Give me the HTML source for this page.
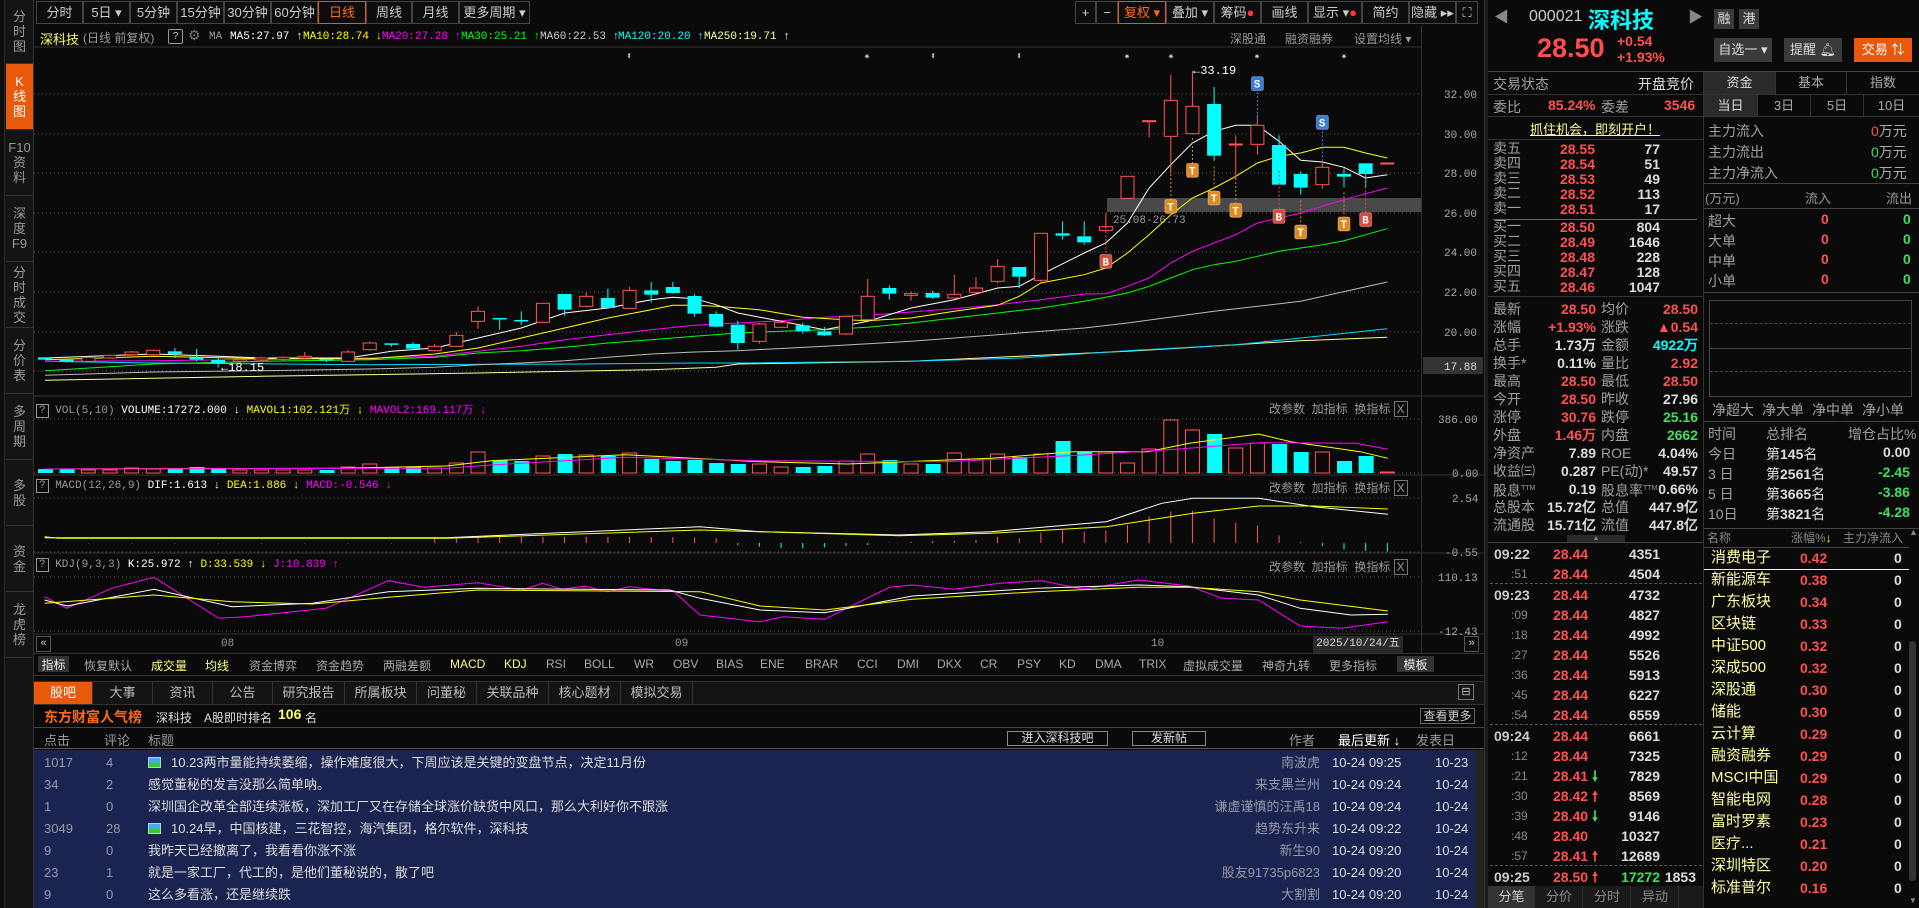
<!DOCTYPE html>
<html><head><meta charset="utf-8">
<style>
*{box-sizing:border-box;margin:0;padding:0}
body{width:1919px;height:908px;overflow:hidden;background:#0a0a0a;font-family:"Liberation Sans","Noto Sans CJK SC",sans-serif;color:#aaa;position:relative}
.a{position:absolute;white-space:nowrap}
.side{position:absolute;left:0;top:0;width:34px;height:908px;background:#141414;border-right:1px solid #333}
.side div{position:absolute;left:6px;width:27px;border-bottom:1px solid #333;color:#999;font-size:13px;line-height:15px;text-align:center;display:flex;flex-direction:column;justify-content:center}
.tb{position:absolute;top:1px;height:23px;border:1px solid #444;color:#ccc;font-size:13px;line-height:21px;text-align:center;background:#0d0d0d}
.m{font-family:"Liberation Mono","Noto Sans CJK SC",monospace;font-size:11px}
.r{color:#ff5050}.g{color:#3de05a}.c{color:#00ffff}.w{color:#ddd}.y{color:#ffff00}.mg{color:#ff00ff}
.lb{font-size:14px;color:#a0a0a0}
.num{font-size:14px;font-weight:bold;font-family:"Liberation Sans",sans-serif}
.hl{position:absolute;height:1px;background:#333}
.it{font-size:12px;color:#aaa;top:657px}
.nt{position:absolute;top:682px;height:22px;font-size:13px;line-height:22px;text-align:center;color:#bbb;border-right:1px solid #333}
.row{position:absolute;left:34px;width:1441px;height:22px;font-size:13px;line-height:22px;color:#ddd}
.row span{position:absolute}
</style></head><body>

<!-- left sidebar -->
<div class="side">
<div style="top:0;height:64px">分<br>时<br>图</div>
<div style="top:64px;height:66px;background:#e8590c;color:#fff">K<br>线<br>图</div>
<div style="top:130px;height:66px">F10<br>资<br>料</div>
<div style="top:196px;height:66px">深<br>度<br>F9</div>
<div style="top:262px;height:66px">分<br>时<br>成<br>交</div>
<div style="top:328px;height:66px">分<br>价<br>表</div>
<div style="top:394px;height:66px">多<br>周<br>期</div>
<div style="top:460px;height:66px">多<br>股</div>
<div style="top:526px;height:66px">资<br>金</div>
<div style="top:592px;height:66px">龙<br>虎<br>榜</div>
</div>
<div class="a" style="left:0;top:0;width:5px;height:908px;background:#0e0e0e;border-right:1px solid #2a2a2a"></div>

<!-- top toolbar -->
<div class="tb" style="left:36px;width:47px">分时</div>
<div class="tb" style="left:83px;width:47px">5日 ▾</div>
<div class="tb" style="left:130px;width:47px">5分钟</div>
<div class="tb" style="left:177px;width:47px">15分钟</div>
<div class="tb" style="left:224px;width:47px">30分钟</div>
<div class="tb" style="left:271px;width:47px">60分钟</div>
<div class="tb" style="left:318px;width:48px;border-color:#e8590c;color:#ff6a1a">日线</div>
<div class="tb" style="left:366px;width:46px">周线</div>
<div class="tb" style="left:412px;width:47px">月线</div>
<div class="tb" style="left:459px;width:71px">更多周期 ▾</div>

<div class="tb" style="left:1075px;width:21px">+</div>
<div class="tb" style="left:1096px;width:22px">−</div>
<div class="tb" style="left:1118px;width:48px;border-color:#e8590c;color:#ff6a1a">复权 ▾</div>
<div class="tb" style="left:1166px;width:48px">叠加 ▾</div>
<div class="tb" style="left:1214px;width:47px">筹码<span style="color:#f33">●</span></div>
<div class="tb" style="left:1261px;width:47px">画线</div>
<div class="tb" style="left:1308px;width:54px">显示 ▾<span style="color:#f33">●</span></div>
<div class="tb" style="left:1362px;width:47px">简约</div>
<div class="tb" style="left:1409px;width:47px">隐藏 ▸▸</div>
<div class="tb" style="left:1456px;width:22px">⛶</div>

<!-- info line -->
<div class="a" style="left:40px;top:29px;font-size:13px;color:#ffff66">深科技</div>
<div class="a" style="left:83px;top:29px;font-size:12px;color:#999">(日线 前复权)</div>
<div class="a" style="left:168px;top:29px;width:15px;height:15px;border:1px solid #999;border-radius:2px;font-size:10px;text-align:center;line-height:13px;color:#ccc">?</div>
<div class="a" style="left:188px;top:27px;font-size:14px;color:#777">⚙</div>
<div class="a m" style="left:209px;top:31px;color:#999">MA</div>
<div class="a m" style="left:230px;top:31px;color:#fff">MA5:27.97 ↑</div>
<div class="a m" style="left:303px;top:31px;color:#ff0">MA10:28.74 ↓</div>
<div class="a m" style="left:382px;top:31px;color:#f0f">MA20:27.28 ↑</div>
<div class="a m" style="left:461px;top:31px;color:#0f0">MA30:25.21 ↑</div>
<div class="a m" style="left:540px;top:31px;color:#ccc">MA60:22.53 ↑</div>
<div class="a m" style="left:618px;top:31px;color:#0ff">MA120:20.20 ↑</div>
<div class="a m" style="left:704px;top:31px;color:#ffff99">MA250:19.71 ↑</div>
<div class="a" style="left:1230px;top:30px;font-size:12px;color:#999">深股通</div>
<div class="a" style="left:1285px;top:30px;font-size:12px;color:#999">融资融券</div>
<div class="a" style="left:1354px;top:30px;font-size:12px;color:#999">设置均线 ▾</div>

<svg id="ch" class="a" style="left:0;top:0" width="1488" height="680"></svg>

<!-- sub panel headers -->
<div class="a m" style="left:36px;top:401px;color:#999"><span style="border:1px solid #999;padding:0 2px">?</span> VOL(5,10) <span style="color:#fff">VOLUME:17272.000 ↓</span> <span class="y">MAVOL1:102.121万 ↓</span> <span class="mg">MAVOL2:169.117万 ↓</span></div>
<div class="a m" style="left:36px;top:480px;color:#999"><span style="border:1px solid #999;padding:0 2px">?</span> MACD(12,26,9) <span style="color:#fff">DIF:1.613 ↓</span> <span class="y">DEA:1.886 ↓</span> <span class="mg">MACD:-0.546 ↓</span></div>
<div class="a m" style="left:36px;top:559px;color:#999"><span style="border:1px solid #999;padding:0 2px">?</span> KDJ(9,3,3) <span style="color:#fff">K:25.972 ↑</span> <span class="y">D:33.539 ↓</span> <span class="mg">J:10.839 ↑</span></div>
<div class="a" style="left:1269px;top:400px;font-size:12px;color:#999">改参数 &nbsp;加指标 &nbsp;换指标 <span style="border:1px solid #777;padding:0 2px">X</span></div>
<div class="a" style="left:1269px;top:479px;font-size:12px;color:#999">改参数 &nbsp;加指标 &nbsp;换指标 <span style="border:1px solid #777;padding:0 2px">X</span></div>
<div class="a" style="left:1269px;top:558px;font-size:12px;color:#999">改参数 &nbsp;加指标 &nbsp;换指标 <span style="border:1px solid #777;padding:0 2px">X</span></div>

<!-- time axis -->
<div class="a" style="left:36px;top:636px;width:15px;height:16px;border:1px solid #555;font-size:11px;color:#ccc;text-align:center">«</div>
<div class="a m" style="left:221px;top:638px;color:#999">08</div>
<div class="a m" style="left:675px;top:638px;color:#999">09</div>
<div class="a m" style="left:1151px;top:638px;color:#999">10</div>
<div class="a m" style="left:1313px;top:636px;width:90px;height:17px;background:#2a2a2a;color:#ddd;line-height:17px;text-align:center">2025/10/24/五</div>
<div class="a" style="left:1464px;top:636px;width:15px;height:16px;border:1px solid #555;font-size:11px;color:#ccc;text-align:center">»</div>
<div class="hl" style="left:34px;top:653px;width:1450px;background:#333"></div>

<!-- indicator tabs -->
<div class="a" style="left:38px;top:656px;width:31px;height:16px;background:#333;color:#eee;font-size:12px;text-align:center">指标</div>
<div class="a it" style="left:84px">恢复默认</div>
<div class="a it" style="left:151px;color:#ffff80">成交量</div>
<div class="a it" style="left:205px;color:#ffff80">均线</div>
<div class="a it" style="left:249px">资金博弈</div>
<div class="a it" style="left:316px">资金趋势</div>
<div class="a it" style="left:383px">两融差额</div>
<div class="a it" style="left:450px;color:#ffff80">MACD</div>
<div class="a it" style="left:504px;color:#ffff80">KDJ</div>
<div class="a it" style="left:546px">RSI</div>
<div class="a it" style="left:584px">BOLL</div>
<div class="a it" style="left:634px">WR</div>
<div class="a it" style="left:673px">OBV</div>
<div class="a it" style="left:716px">BIAS</div>
<div class="a it" style="left:760px">ENE</div>
<div class="a it" style="left:805px">BRAR</div>
<div class="a it" style="left:857px">CCI</div>
<div class="a it" style="left:897px">DMI</div>
<div class="a it" style="left:937px">DKX</div>
<div class="a it" style="left:980px">CR</div>
<div class="a it" style="left:1017px">PSY</div>
<div class="a it" style="left:1059px">KD</div>
<div class="a it" style="left:1095px">DMA</div>
<div class="a it" style="left:1139px">TRIX</div>
<div class="a it" style="left:1183px">虚拟成交量</div>
<div class="a it" style="left:1262px">神奇九转</div>
<div class="a it" style="left:1329px">更多指标</div>
<div class="a" style="left:1397px;top:656px;width:37px;height:16px;background:#333;color:#eee;font-size:12px;text-align:center">模板</div>
<div class="hl" style="left:34px;top:675px;width:1450px;background:#333"></div>

<!-- news tabs -->
<div class="a" style="left:34px;top:681px;width:1450px;height:24px;background:#141414;border-top:1px solid #333;border-bottom:1px solid #333"></div>
<div class="nt" style="left:34px;width:59px;background:#e8590c;color:#fff">股吧</div>
<div class="nt" style="left:93px;width:60px">大事</div>
<div class="nt" style="left:153px;width:60px">资讯</div>
<div class="nt" style="left:213px;width:60px">公告</div>
<div class="nt" style="left:273px;width:72px">研究报告</div>
<div class="nt" style="left:345px;width:72px">所属板块</div>
<div class="nt" style="left:417px;width:60px">问董秘</div>
<div class="nt" style="left:477px;width:72px">关联品种</div>
<div class="nt" style="left:549px;width:72px">核心题材</div>
<div class="nt" style="left:621px;width:72px">模拟交易</div>
<div class="a" style="left:1458px;top:684px;width:16px;height:16px;border:1px solid #777;color:#ccc;font-size:11px;text-align:center;line-height:14px">⊟</div>

<div class="a" style="left:44px;top:707px;font-size:14px;font-weight:bold;color:#ff6a1a">东方财富人气榜</div>
<div class="a" style="left:156px;top:709px;font-size:12px;color:#ddd">深科技</div>
<div class="a" style="left:204px;top:709px;font-size:12px;color:#ddd">A股即时排名</div>
<div class="a" style="left:278px;top:706px;font-size:14px;font-weight:bold;color:#ffff66">106</div>
<div class="a" style="left:305px;top:709px;font-size:12px;color:#ddd">名</div>
<div class="a" style="left:1420px;top:708px;width:55px;height:16px;border:1px solid #666;font-size:12px;color:#ccc;text-align:center;line-height:14px">查看更多</div>
<div class="hl" style="left:34px;top:727px;width:1450px;background:#444"></div>
<div class="a" style="left:44px;top:730px;font-size:13px;color:#999">点击</div>
<div class="a" style="left:104px;top:730px;font-size:13px;color:#999">评论</div>
<div class="a" style="left:148px;top:730px;font-size:13px;color:#999">标题</div>
<div class="a" style="left:1007px;top:731px;width:101px;height:15px;border:1px solid #888;font-size:12px;color:#ddd;text-align:center;line-height:13px">进入深科技吧</div>
<div class="a" style="left:1132px;top:731px;width:74px;height:15px;border:1px solid #888;font-size:12px;color:#ddd;text-align:center;line-height:13px">发新帖</div>
<div class="a" style="left:1289px;top:730px;font-size:13px;color:#999">作者</div>
<div class="a" style="left:1338px;top:730px;font-size:13px;color:#fff">最后更新 ↓</div>
<div class="a" style="left:1416px;top:730px;font-size:13px;color:#999">发表日</div>
<div class="hl" style="left:34px;top:748px;width:1450px;background:#555"></div>
<div class="a" style="left:34px;top:750px;width:1441px;height:158px;background:#1b2350"></div>
<div class="a" style="left:1475px;top:750px;width:9px;height:158px;background:#222"></div>

<div id="rows"></div>

<!-- separator strip -->
<div class="a" style="left:1484px;top:0;width:4px;height:908px;background:#1a1a1a;border-left:1px solid #333"></div>

<!-- right panel -->
<div class="a" style="left:1494px;top:6px;font-size:15px;color:#888">◀</div>
<div class="a" style="left:1529px;top:8px;font-size:16px;color:#ccc">000021</div>
<div class="a" style="left:1588px;top:3px;font-size:22px;font-weight:bold;color:#00ffff">深科技</div>
<div class="a" style="left:1688px;top:6px;font-size:15px;color:#888">▶</div>
<div class="a" style="left:1537px;top:33px;font-size:27px;font-weight:bold;color:#ff4d4d">28.50</div>
<div class="a num r" style="left:1617px;top:33px">+0.54</div>
<div class="a num r" style="left:1617px;top:49px">+1.93%</div>
<div class="a" style="left:1714px;top:9px;width:20px;height:20px;background:#3a3a3a;color:#ddd;font-size:13px;text-align:center;line-height:20px">融</div>
<div class="a" style="left:1739px;top:9px;width:20px;height:20px;background:#3a3a3a;color:#ddd;font-size:13px;text-align:center;line-height:20px">港</div>
<div class="a" style="left:1714px;top:38px;width:58px;height:24px;background:#3a3a3a;color:#ddd;font-size:13px;text-align:center;line-height:24px">自选一 ▾</div>
<div class="a" style="left:1784px;top:38px;width:58px;height:24px;background:#3a3a3a;color:#ddd;font-size:13px;text-align:center;line-height:24px">提醒 🔔︎</div>
<div class="a" style="left:1854px;top:38px;width:58px;height:24px;background:#e8590c;color:#fff;font-size:13px;text-align:center;line-height:24px">交易 ⇅</div>
<div class="hl" style="left:1488px;top:71px;width:431px;background:#444"></div>
<div class="a" style="left:1703px;top:71px;width:1px;height:837px;background:#333"></div>

<div class="a lb" style="left:1493px;top:74px">交易状态</div>
<div class="a w" style="left:1638px;top:74px;font-size:14px">开盘竞价</div>
<div class="hl" style="left:1488px;top:94px;width:215px"></div>
<div class="a lb" style="left:1493px;top:97px">委比</div>
<div class="a num r" style="left:1548px;top:97px">85.24%</div>
<div class="a lb" style="left:1601px;top:97px">委差</div>
<div class="a num r" style="left:1664px;top:97px">3546</div>
<div class="hl" style="left:1488px;top:116px;width:215px"></div>
<div class="a" style="left:1530px;top:119px;font-size:13px;color:#ffff99;text-decoration:underline">抓住机会，即刻开户！</div>
<div class="hl" style="left:1488px;top:139px;width:215px"></div>
<div id="ob"></div>
<div class="hl" style="left:1493px;top:219px;width:204px;background:#666"></div>
<div class="hl" style="left:1488px;top:296px;width:215px"></div>
<div id="st"></div>
<div class="a" style="left:1567px;top:535px;width:58px;height:7px;background:#2a2a2a;color:#888;font-size:7px;text-align:center;line-height:7px">▲</div>
<div class="hl" style="left:1488px;top:542px;width:215px;background:#444"></div>
<div id="tk"></div>
<div class="a" style="left:1488px;top:886px;width:215px;height:22px;background:#1a1a1a"></div>
<div class="a" style="left:1488px;top:886px;width:47px;height:22px;background:#333;color:#ccc;font-size:13px;text-align:center;line-height:22px">分笔</div>
<div class="a" style="left:1536px;top:886px;width:47px;height:22px;color:#888;font-size:13px;text-align:center;line-height:22px;border-right:1px solid #333">分价</div>
<div class="a" style="left:1584px;top:886px;width:47px;height:22px;color:#888;font-size:13px;text-align:center;line-height:22px;border-right:1px solid #333">分时</div>
<div class="a" style="left:1632px;top:886px;width:47px;height:22px;color:#888;font-size:13px;text-align:center;line-height:22px;border-right:1px solid #333">异动</div>

<!-- right col -->
<div class="a" style="left:1704px;top:72px;width:71px;height:22px;background:#2a2a2a;color:#ddd;font-size:13px;text-align:center;line-height:22px">资金</div>
<div class="a" style="left:1775px;top:72px;width:71px;height:22px;color:#aaa;font-size:13px;text-align:center;line-height:22px;border-left:1px solid #333">基本</div>
<div class="a" style="left:1846px;top:72px;width:73px;height:22px;color:#aaa;font-size:13px;text-align:center;line-height:22px;border-left:1px solid #333">指数</div>
<div class="hl" style="left:1704px;top:94px;width:215px"></div>
<div class="a" style="left:1704px;top:95px;width:53px;height:21px;background:#2a2a2a;color:#ddd;font-size:13px;text-align:center;line-height:21px">当日</div>
<div class="a" style="left:1757px;top:95px;width:53px;height:21px;color:#aaa;font-size:13px;text-align:center;line-height:21px;border-left:1px solid #333">3日</div>
<div class="a" style="left:1810px;top:95px;width:53px;height:21px;color:#aaa;font-size:13px;text-align:center;line-height:21px;border-left:1px solid #333">5日</div>
<div class="a" style="left:1863px;top:95px;width:56px;height:21px;color:#aaa;font-size:13px;text-align:center;line-height:21px;border-left:1px solid #333">10日</div>
<div class="hl" style="left:1704px;top:116px;width:215px"></div>
<div class="a lb" style="left:1708px;top:121px">主力流入</div><div class="a" style="left:1871px;top:121px;font-size:14px"><span class="r">0</span>万元</div>
<div class="a lb" style="left:1708px;top:142px">主力流出</div><div class="a" style="left:1871px;top:142px;font-size:14px"><span class="g">0</span>万元</div>
<div class="a lb" style="left:1708px;top:163px">主力净流入</div><div class="a" style="left:1871px;top:163px;font-size:14px"><span class="g">0</span>万元</div>
<div class="hl" style="left:1704px;top:183px;width:215px;background:#444"></div>
<div class="a" style="left:1705px;top:188px;font-size:13px;color:#999">(万元)</div>
<div class="a" style="left:1805px;top:188px;font-size:13px;color:#999">流入</div>
<div class="a" style="left:1886px;top:188px;font-size:13px;color:#999">流出</div>
<div class="hl" style="left:1704px;top:208px;width:215px;background:#444"></div>
<div class="a lb" style="left:1708px;top:211px">超大</div><div class="a num r" style="left:1821px;top:211px">0</div><div class="a num g" style="left:1903px;top:211px">0</div>
<div class="a lb" style="left:1708px;top:231px">大单</div><div class="a num r" style="left:1821px;top:231px">0</div><div class="a num g" style="left:1903px;top:231px">0</div>
<div class="a lb" style="left:1708px;top:251px">中单</div><div class="a num r" style="left:1821px;top:251px">0</div><div class="a num g" style="left:1903px;top:251px">0</div>
<div class="a lb" style="left:1708px;top:271px">小单</div><div class="a num r" style="left:1821px;top:271px">0</div><div class="a num g" style="left:1903px;top:271px">0</div>
<div class="hl" style="left:1704px;top:292px;width:215px;background:#444"></div>
<div class="a" style="left:1709px;top:300px;width:203px;height:97px;border:1px solid #444"></div>
<div class="a" style="left:1710px;top:323px;width:201px;border-top:1px dashed #444"></div>
<div class="a" style="left:1710px;top:348px;width:201px;border-top:1px solid #444"></div>
<div class="a" style="left:1710px;top:371px;width:201px;border-top:1px dashed #444"></div>
<div class="a lb" style="left:1712px;top:400px">净超大</div>
<div class="a lb" style="left:1762px;top:400px">净大单</div>
<div class="a lb" style="left:1812px;top:400px">净中单</div>
<div class="a lb" style="left:1862px;top:400px">净小单</div>
<div class="hl" style="left:1704px;top:421px;width:215px;background:#444"></div>
<div class="a lb" style="left:1708px;top:424px">时间</div>
<div class="a lb" style="left:1766px;top:424px">总排名</div>
<div class="a lb" style="left:1848px;top:424px">增仓占比%</div>
<div class="a lb" style="left:1708px;top:444px">今日</div><div class="a w" style="left:1766px;top:444px;font-size:14px">第<b>145</b>名</div><div class="a num w" style="left:1883px;top:444px">0.00</div>
<div class="a lb" style="left:1708px;top:464px">3 日</div><div class="a w" style="left:1766px;top:464px;font-size:14px">第<b>2561</b>名</div><div class="a num g" style="left:1878px;top:464px">-2.45</div>
<div class="a lb" style="left:1708px;top:484px">5 日</div><div class="a w" style="left:1766px;top:484px;font-size:14px">第<b>3665</b>名</div><div class="a num g" style="left:1878px;top:484px">-3.86</div>
<div class="a lb" style="left:1708px;top:504px">10日</div><div class="a w" style="left:1766px;top:504px;font-size:14px">第<b>3821</b>名</div><div class="a num g" style="left:1878px;top:504px">-4.28</div>
<div class="hl" style="left:1704px;top:528px;width:215px;background:#444"></div>
<div class="a" style="left:1707px;top:529px;font-size:12px;color:#888">名称</div>
<div class="a" style="left:1791px;top:529px;font-size:12px;color:#888">涨幅%<span style="color:#ff0">↓</span></div>
<div class="a" style="left:1843px;top:529px;font-size:12px;color:#888">主力净流入</div>
<div class="a" style="left:1909px;top:527px;font-size:9px;color:#888">▲</div>
<div class="hl" style="left:1704px;top:547px;width:205px;background:#444"></div>
<div class="a" style="left:1704px;top:569px;width:205px;height:1px;background:#ffff99"></div>
<div id="bk"></div>
<div class="a" style="left:1909px;top:641px;width:7px;height:240px;background:#333;border-radius:3px"></div>
<div class="a" style="left:1909px;top:896px;font-size:8px;color:#888">▼</div>

<script>
const S=document.getElementById('ch');let h='';
const X=k=>45+k*21.65, Y=v=>48+v/3;
const ln=(x1,y1,x2,y2,c,e)=>h+=`<line x1="${x1}" y1="${y1}" x2="${x2}" y2="${y2}" stroke="${c}" ${e||''}/>`;
const tx=(x,y,t,c,s,a)=>h+=`<text x="${x}" y="${y}" fill="${c}" font-size="${s||11}" font-family="Liberation Mono,monospace" ${a||''}>${t}</text>`;
const pl=(p,c)=>h+=`<polyline points="${p.map(q=>q.join(',')).join(' ')}" fill="none" stroke="${c}" stroke-width="1"/>`;
// frames
ln(34,47,1421,47,'#333');ln(1421.5,26,1421.5,653,'#333');
ln(34,396,1484,396,'#333');ln(34,475,1484,475,'#333');ln(34,553,1484,553,'#333');ln(34,634,1484,634,'#333');
// grid
const gp=[[94,'32.00'],[134,'30.00'],[173,'28.00'],[213,'26.00'],[252,'24.00'],[292,'22.00'],[332,'20.00'],[371,'']];
gp.forEach(g=>{ln(34,g[0],1421,g[0],'#555','stroke-dasharray="1,3"');if(g[1])tx(1444,g[0]+4,g[1],'#aaa');});
h+=`<rect x="1423" y="357" width="60" height="17" fill="#333"/>`;tx(1444,370,'17.88','#ddd');
[[419,'386.00'],[473,'0.00']].forEach(g=>{ln(34,g[0],1421,g[0],'#555','stroke-dasharray="1,3"');tx(g[1].length>4?1438:1452,g[0]+4,g[1],'#aaa');});
[[498,'2.54'],[552,'-0.55']].forEach(g=>{ln(34,g[0],1421,g[0],'#555','stroke-dasharray="1,3"');tx(g[1].length>4?1445:1452,g[0]+4,g[1],'#aaa');});
[[577,'110.13'],[631,'-12.43']].forEach(g=>{ln(34,g[0],1421,g[0],'#555','stroke-dasharray="1,3"');tx(1438,g[0]+4,g[1],'#aaa');});
// band
h+=`<rect x="1107" y="198" width="314" height="14" fill="#555" opacity="0.85"/>`;
tx(1113,223,'25.08-26.73','#999');
// top markers
[[630,'⬍'],[868,'✷'],[934,'⬍'],[1020,'⬍'],[1128,'✷'],[1172,'✷'],[1258,'✷'],[1345,'✷']].forEach(m=>tx(m[0]-4,59,m[1],'#ccc',10));
// MAs
const mk=(a,c)=>{const p=[];for(let i=0;i<a.length;i+=2)p.push([X(a[i]).toFixed(1),Y(a[i+1]).toFixed(1)]);pl(p,c);};
mk([0,997,10,985,20,975,28,965,31,958,32,948,40,940,45,925,50,910,55,890,58,878,62,868],'#ffff99');
mk([0,940,5,945,15,950,25,948,30,945,32,945,40,940,45,930,50,908,55,890,58,870,62,842],'#00d8ff');
mk([0,982,5,972,10,968,15,963,18,958,20,950,22,945,24,938,26,928,28,918,30,912,32,908,36,895,40,880,44,860,48,840,50,825,54,790,58,760,62,702],'#bbb');
mk([0,968,5,948,10,940,15,935,18,928,20,915,22,908,24,898,26,885,28,875,30,865,32,855,34,850,36,845,38,838,40,825,42,810,44,795,46,780,48,760,49,748,50,735,51,715,52,690,53,665,54,650,55,640,56,625,57,610,58,600,59,590,60,578,61,560,62,542],'#00ff00');
mk([0,940,5,938,10,934,15,930,18,925,20,910,22,895,24,875,26,860,28,845,30,832,32,825,34,818,36,808,38,802,40,792,42,782,44,770,46,755,48,738,49,737,50,715,51,690,52,645,53,610,54,585,55,560,56,525,57,510,58,495,59,475,60,455,61,437,62,420],'#ff00ff');
mk([0,935,5,925,10,932,15,932,18,918,20,900,22,870,24,840,26,810,28,785,29,772,30,772,31,775,32,780,33,785,35,808,37,815,38,818,40,810,42,790,44,772,45,745,46,705,48,680,49,660,50,615,51,560,52,500,53,450,54,420,55,385,56,345,57,325,58,315,59,298,60,298,61,315,62,330],'#ffff00');
mk([0,930,5,918,8,925,10,930,14,930,16,910,18,900,20,870,22,840,24,795,26,780,28,755,29,748,30,752,31,770,32,795,34,820,36,845,38,820,40,780,42,755,44,720,45,715,46,680,48,615,49,585,50,525,51,420,52,350,53,285,54,250,55,232,56,232,57,280,58,337,59,342,60,358,61,390,62,380],'#ffffff');
// candles
const C=[[928,935,928,935,'c'],[935,942,933,944,'c'],[928,940,926,940,'r'],[922,930,920,932,'r'],[912,920,909,922,'r'],[907,920,905,922,'r'],[910,918,900,930,'c'],[928,935,903,940,'c'],[936,946,930,958,'c'],[935,940,930,945,'r'],[930,936,926,940,'r'],[928,934,925,938,'r'],[925,930,912,934,'r'],[933,938,930,942,'c'],[912,940,905,942,'r'],[885,905,880,908,'r'],[886,888,886,896,'c'],[888,902,882,906,'c'],[895,908,888,910,'r'],[862,895,852,897,'r'],[790,820,775,842,'r'],[810,812,810,845,'c'],[816,818,790,830,'c'],[766,823,766,825,'r'],[738,785,738,803,'c'],[745,775,733,778,'r'],[750,780,722,782,'c'],[727,781,717,783,'r'],[727,740,702,763,'c'],[717,735,702,737,'c'],[744,797,738,806,'c'],[798,836,790,838,'c'],[830,885,818,905,'c'],[828,880,825,887,'r'],[823,838,820,840,'r'],[832,850,825,857,'c'],[850,862,837,864,'c'],[805,858,803,862,'r'],[745,815,693,817,'r'],[720,737,712,755,'c'],[737,742,730,758,'r'],[735,749,728,753,'c'],[739,750,680,752,'r'],[720,733,688,740,'r'],[655,700,633,706,'r'],[657,686,657,720,'c'],[556,697,556,705,'r'],[556,563,520,575,'c'],[565,583,520,590,'c'],[536,547,495,549,'r'],[385,451,385,451,'r'],[218,220,218,268,'r'],[157,265,80,375,'r'],[175,257,68,259,'r'],[168,323,117,338,'c'],[288,290,262,390,'r'],[232,289,200,320,'r'],[291,410,262,410,'c'],[378,419,370,440,'c'],[358,410,340,422,'r'],[378,386,362,418,'c'],[346,378,346,418,'c'],[345,347,345,347,'r']];
C.forEach((c,k)=>{const x=X(k),col=c[4]=='r'?'#ff5555':'#00ffff';const t=Y(c[0]),b=Math.max(Y(c[1]),t+1);
ln(x,Y(c[2]),x,t,col);ln(x,b,x,Y(c[3]),col);
if(c[4]=='r')h+=`<rect x="${x-6.5}" y="${t}" width="13" height="${b-t}" fill="#0a0a0a" stroke="${col}"/>`;
else h+=`<rect x="${x-7}" y="${t}" width="14" height="${Math.max(b-t,1.5)}" fill="${col}"/>`;});
// labels
tx(1193,74,'←33.19','#fff',12);tx(221,371,'←18.15','#fff',12);
// markers
const bd=(k,v,l,c,lv)=>{const x=X(k),y=Y(v);if(lv!==undefined)ln(x,Y(lv),x,y,c,'stroke-dasharray="2,2"');h+=`<rect x="${x-6}" y="${y-7}" width="12" height="14" rx="2" fill="${c}" stroke="#fff" stroke-opacity=".3"/>`;tx(x-3.5,y+4,l,'#fff',11,'font-weight="bold"');};
bd(49,640,'B','#d84a3c',525);bd(57,505,'B','#d84a3c',368);bd(61,515,'B','#d84a3c',368);
bd(52,475,'T','#e08a1e',378);bd(53,367,'T','#e08a1e',270);bd(54,450,'T','#e08a1e',355);bd(55,487,'T','#e08a1e',390);bd(58,552,'T','#e08a1e',457);bd(60,528,'T','#e08a1e',433);
bd(56,107,'S','#3a7bd5',222);bd(59,223,'S','#3a7bd5',340);
// volume
const V=[4,4,3,3,5,4,4,6,4,3,3,3,3,3,6,9,6,6,5,10,21,13,12,17,19,18,17,20,14,12,13,10,9,9,6,6,7,12,19,13,9,9,20,14,19,16,19,32,21,21,10,24,53,43,39,25,30,29,21,21,12,17,1];
V.forEach((v,k)=>{const x=X(k),col=C[k][4]=='r'?'#ff5555':'#00ffff';if(C[k][4]=='r')h+=`<rect x="${x-7}" y="${473-v}" width="14" height="${v}" fill="none" stroke="${col}"/>`;else h+=`<rect x="${x-7}" y="${473-v}" width="15" height="${v}" fill="${col}"/>`;});
const z9=(X_,Y_)=>[(X_/2.24).toFixed(1),(390+Y_/3).toFixed(1)], z10=(X_,Y_)=>[(760+X_/2.166).toFixed(1),(390+Y_/3).toFixed(1)];
const P=(a,b,c)=>{const p=[];a.forEach(q=>p.push(z9(q[0],q[1])));b.forEach(q=>p.push(z10(q[0],q[1])));pl(p,c);};
P([[100,237],[760,235],[1000,228],[1100,212],[1400,194]],[[0,215],[190,222],[500,205],[680,185],[840,185],[930,160],[1080,132],[1150,155],[1300,185],[1360,205]],'#ffff00');
P([[100,237],[1000,235],[1100,225],[1400,202]],[[0,212],[400,215],[700,195],[900,178],[1080,158],[1290,160],[1360,178]],'#ff00ff');
// macd
const MH=[460,459,460,459,460,459,460,459,460,459,460,459,460,459,460,459,460,459,445,443,442,441,440,440,441,440,440,440,441,442,443,444,466,470,474,475,472,468,465,458,455,453,452,450,440,445,428,420,425,422,405,380,365,362,385,398,407,437,456,468,478,482,485];
MH.forEach((v,k)=>{const x=X(k);const z=Y(0)*0+543;const y=390+v/3;ln(x,z,x,y,v<458?'#ff5555':'#00ffff');});
P([[100,443],[1000,443],[1568,410]],[[0,425],[300,435],[500,425],[750,395],[870,340],[938,325],[1080,325],[1200,350],[1360,373]],'#ffffff');
P([[100,440],[130,445],[1000,445],[1568,420]],[[0,425],[300,437],[500,430],[750,410],[938,370],[1080,348],[1200,348],[1360,357]],'#ffff00');
// kdj
P([[100,620],[150,655],[250,595],[345,562],[490,685],[550,680],[730,655],[870,572],[950,592],[1070,578],[1170,600],[1215,580],[1260,598],[1310,588],[1360,605],[1410,590],[1510,605],[1568,675]],[[0,695],[50,680],[140,688],[280,592],[330,585],[420,598],[520,580],[610,572],[700,598],[820,570],[930,588],[1000,625],[1080,630],[1170,708],[1260,715],[1360,695]],'#ff00ff');
P([[100,630],[150,648],[345,598],[520,650],[700,640],[870,605],[1070,595],[1500,600],[1568,625]],[[0,660],[140,668],[330,618],[600,595],[820,585],[930,590],[1080,615],[1170,655],[1280,675],[1360,673]],'#ffffff');
P([[100,640],[345,615],[520,635],[700,642],[870,622],[1070,600],[1568,605]],[[0,648],[140,660],[330,628],[600,605],[820,592],[930,592],[1080,605],[1170,630],[1360,663]],'#ffff00');
S.innerHTML=h;

// news rows
const R=[['1017','4',1,'10.23两市量能持续萎缩，操作难度很大，下周应该是关键的变盘节点，决定11月份','南波虎','10-24 09:25','10-23'],
['34','2',0,'感觉董秘的发言没那么简单呐。','来支黑兰州','10-24 09:24','10-24'],
['1','0',0,'深圳国企改革全部连续涨板，深加工厂又在存储全球涨价缺货中风口，那么大利好你不跟涨','谦虚谨慎的汪禹18','10-24 09:24','10-24'],
['3049','28',1,'10.24早，中国核建，三花智控，海汽集团，格尔软件，深科技','趋势东升来','10-24 09:22','10-24'],
['9','0',0,'我昨天已经撤离了，我看看你涨不涨','新生90','10-24 09:20','10-24'],
['23','1',0,'就是一家工厂，代工的，是他们董秘说的，散了吧','股友91735p6823','10-24 09:20','10-24'],
['9','0',0,'这么多看涨，还是继续跌','大割割','10-24 09:20','10-24']];
let r='';R.forEach((a,i)=>{const t=752+i*22;r+=`<div class="row" style="top:${t}px"><span style="left:10px;color:#99a">${a[0]}</span><span style="left:72px;color:#99a">${a[1]}</span>${a[2]?'<span style="left:114px;top:5px;width:13px;height:11px;background:linear-gradient(#4af 0,#4af 50%,#3c3 50%);border:1px solid #ccc"></span>':''}<span style="left:${a[2]?137:114}px">${a[3]}</span><span style="right:155px;color:#99a">${a[4]}</span><span style="left:1298px">${a[5]}</span><span style="left:1401px">${a[6]}</span></div>`;});
document.getElementById('rows').innerHTML=r;

// order book
const OB=[['卖五','28.55','77'],['卖四','28.54','51'],['卖三','28.53','49'],['卖二','28.52','113'],['卖一','28.51','17'],['买一','28.50','804'],['买二','28.49','1646'],['买三','28.48','228'],['买四','28.47','128'],['买五','28.46','1047']];
let o='';OB.forEach((a,i)=>{const c=(i<5?150:228)+(i%5)*15-9;o+=`<div class="a lb" style="left:1493px;top:${c-1}px;line-height:17px">${a[0]}</div><div class="a num r" style="right:${1919-1595}px;top:${c}px;line-height:17px">${a[1]}</div><div class="a num w" style="right:${1919-1660}px;top:${c}px;line-height:17px">${a[2]}</div>`;});
document.getElementById('ob').innerHTML=o;
// stats
const ST=[['最新','28.50','r','均价','28.50','r'],['涨幅','+1.93%','r','涨跌','▲0.54','r'],['总手','1.73万','w','金额','4922万','c'],['换手*','0.11%','w','量比','2.92','r'],['最高','28.50','r','最低','28.50','r'],['今开','28.50','r','昨收','27.96','w'],['涨停','30.76','r','跌停','25.16','g'],['外盘','1.46万','r','内盘','2662','g'],['净资产','7.89','w','ROE','4.04%','w'],['收益㈢','0.287','w','PE(动)*','49.57','w'],['股息<sup style="font-size:7px">TTM</sup>','0.19','w','股息率<sup style="font-size:7px">TTM</sup>','0.66%','w'],['总股本','15.72亿','w','总值','447.9亿','w'],['流通股','15.71亿','w','流值','447.8亿','w']];
let s='';ST.forEach((a,i)=>{const c=309+i*18-9;s+=`<div class="a lb" style="left:1493px;top:${c}px;line-height:18px">${a[0]}</div><div class="a num ${a[2]}" style="right:${1919-1596}px;top:${c}px;line-height:18px">${a[1]}</div><div class="a lb" style="left:1601px;top:${c}px;line-height:18px">${a[3]}</div><div class="a num ${a[5]}" style="right:${1919-1698}px;top:${c}px;line-height:18px">${a[4]}</div>`;});
document.getElementById('st').innerHTML=s;
// ticks
const TK=[['09:22','28.44','','4351'],[':51','28.44','','4504'],['-'],['09:23','28.44','','4732'],[':09','28.44','','4827'],[':18','28.44','','4992'],[':27','28.44','','5526'],[':36','28.44','','5913'],[':45','28.44','','6227'],[':54','28.44','','6559'],['-'],['09:24','28.44','','6661'],[':12','28.44','','7325'],[':21','28.41','d','7829'],[':30','28.42','u','8569'],[':39','28.40','d','9146'],[':48','28.40','','10327'],[':57','28.41','u','12689'],['-'],['09:25','28.50','u','17272','1853']];
let t='',y=554;TK.forEach(a=>{if(a[0]=='-'){t+=`<div class="a" style="left:1490px;top:${y-11}px;width:212px;border-top:1px dashed #555"></div>`;y+=1;return;}
const big=a[0].length>3;t+=`<div class="a" style="left:${big?1494:1511}px;top:${y-9}px;font-size:${big?14:12}px;${big?'font-weight:bold;color:#ccc':'color:#888'};line-height:18px">${a[0]}</div><div class="a num r" style="left:1553px;top:${y-9}px;line-height:18px">${a[1]}${a[2]=='u'?' <span style="color:#ff5050">🠕</span>':a[2]=='d'?' <span class="g">🠗</span>':''}</div><div class="a num ${a[4]?'g':'w'}" style="right:${1919-1660}px;top:${y-9}px;line-height:18px">${a[3]}</div>${a[4]?`<div class="a num w" style="right:${1919-1696}px;top:${y-9}px;line-height:18px">${a[4]}</div>`:''}`;y+=20;});
document.getElementById('tk').innerHTML=t;
// board list
const BK=[['消费电子','0.42'],['新能源车','0.38'],['广东板块','0.34'],['区块链','0.33'],['中证500','0.32'],['深成500','0.32'],['深股通','0.30'],['储能','0.30'],['云计算','0.29'],['融资融券','0.29'],['MSCI中国','0.29'],['智能电网','0.28'],['富时罗素','0.23'],['医疗...','0.21'],['深圳特区','0.20'],['标准普尔','0.16']];
let b='';BK.forEach((a,i)=>{const c=558+i*22-10;b+=`<div class="a" style="left:1711px;top:${c}px;font-size:15px;color:#ffffa0;line-height:20px">${a[0]}</div><div class="a num r" style="left:1800px;top:${c}px;line-height:20px">${a[1]}</div><div class="a num w" style="left:1894px;top:${c}px;line-height:20px">0</div>`;});
document.getElementById('bk').innerHTML=b;
</script>
</body></html>
